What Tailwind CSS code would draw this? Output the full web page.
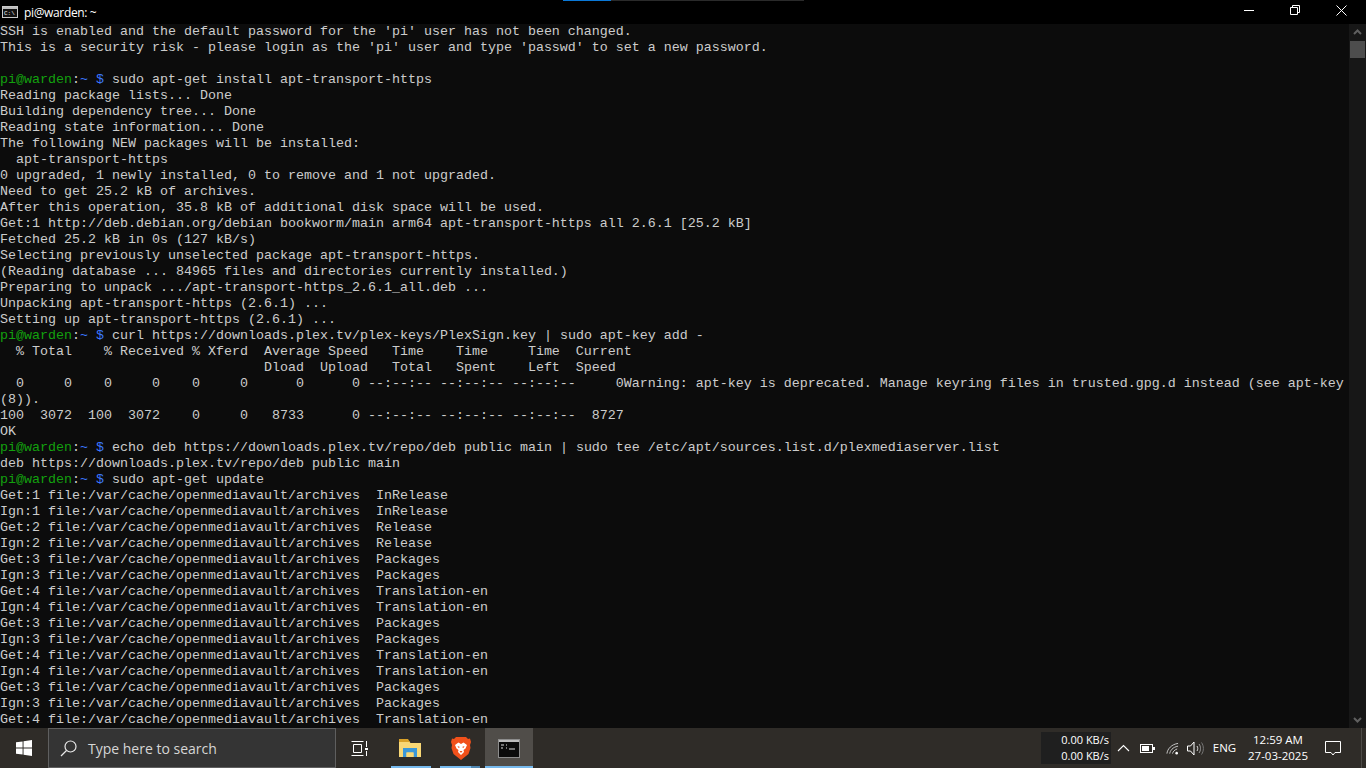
<!doctype html>
<html>
<head>
<meta charset="utf-8">
<script src="https://cdn.jsdelivr.net/npm/@tailwindcss/browser@4"></script>
</head>
<body class="w-[1366px] h-[768px] overflow-hidden bg-black flex flex-col font-['Liberation_Sans',sans-serif]">
<header class="relative h-[24px] shrink-0 bg-black flex items-center text-white">
  <div class="absolute top-0 left-[563px] w-[48px] h-px bg-[#0a78d7]"></div>
  <div class="absolute top-0 left-[611px] w-[193px] h-px bg-[#2a2a2a]"></div>
  <svg class="ml-[2px] mt-[-1px] w-[16px] h-[12px]" viewBox="0 0 16 12"><rect x="0.5" y="0.5" width="15" height="11" fill="#111" stroke="#c8c8c8"/><rect x="1" y="1" width="14" height="2" fill="#bbb"/><text x="2" y="9" font-size="6" fill="#eee" font-family="Liberation Mono">C:\</text></svg>
  <span class="ml-[6px] text-[12px] tracking-[-0.35px] pt-[1px] font-['Open_Sans',sans-serif] text-white">pi@warden: ~</span>
  <div class="ml-auto mr-[2px] flex h-full">
    <button class="w-[46px] h-full pb-[4px] flex items-center justify-center"><svg width="10" height="10" viewBox="0 0 10 10"><path d="M0 5.500h10" stroke="#fff"/></svg></button>
    <button class="w-[46px] h-full pb-[4px] flex items-center justify-center"><svg width="10" height="10" viewBox="0 0 10 10"><path d="M.5 2.500h7v7h-7zM2.500 2.500v-2h7v7h-2" fill="none" stroke="#fff"/></svg></button>
    <button class="w-[46px] h-full pb-[4px] flex items-center justify-center"><svg width="11" height="11" viewBox="0 0 11 11"><path d="M.5.5l10 10M10.500.5l-10 10" stroke="#fff"/></svg></button>
  </div>
</header>

<main class="flex h-[704px] shrink-0">
<pre class="flex-1 m-0 bg-[#0c0c0c] overflow-hidden text-[#cccccc] font-['Liberation_Mono',monospace] text-[13.334px] leading-[16px] whitespace-pre">SSH is enabled and the default password for the 'pi' user has not been changed.
This is a security risk - please login as the 'pi' user and type 'passwd' to set a new password.

<span class="text-[#13a10e]">pi@warden</span>:<span class="text-[#3b78ff]">~ $</span> sudo apt-get install apt-transport-https
Reading package lists... Done
Building dependency tree... Done
Reading state information... Done
The following NEW packages will be installed:
  apt-transport-https
0 upgraded, 1 newly installed, 0 to remove and 1 not upgraded.
Need to get 25.2 kB of archives.
After this operation, 35.8 kB of additional disk space will be used.
Get:1 http://deb.debian.org/debian bookworm/main arm64 apt-transport-https all 2.6.1 [25.2 kB]
Fetched 25.2 kB in 0s (127 kB/s)
Selecting previously unselected package apt-transport-https.
(Reading database ... 84965 files and directories currently installed.)
Preparing to unpack .../apt-transport-https_2.6.1_all.deb ...
Unpacking apt-transport-https (2.6.1) ...
Setting up apt-transport-https (2.6.1) ...
<span class="text-[#13a10e]">pi@warden</span>:<span class="text-[#3b78ff]">~ $</span> curl https://downloads.plex.tv/plex-keys/PlexSign.key | sudo apt-key add -
  % Total    % Received % Xferd  Average Speed   Time    Time     Time  Current
                                 Dload  Upload   Total   Spent    Left  Speed
  0     0    0     0    0     0      0      0 --:--:-- --:--:-- --:--:--     0Warning: apt-key is deprecated. Manage keyring files in trusted.gpg.d instead (see apt-key
(8)).
100  3072  100  3072    0     0   8733      0 --:--:-- --:--:-- --:--:--  8727
OK
<span class="text-[#13a10e]">pi@warden</span>:<span class="text-[#3b78ff]">~ $</span> echo deb https://downloads.plex.tv/repo/deb public main | sudo tee /etc/apt/sources.list.d/plexmediaserver.list
deb https://downloads.plex.tv/repo/deb public main
<span class="text-[#13a10e]">pi@warden</span>:<span class="text-[#3b78ff]">~ $</span> sudo apt-get update
Get:1 file:/var/cache/openmediavault/archives  InRelease
Ign:1 file:/var/cache/openmediavault/archives  InRelease
Get:2 file:/var/cache/openmediavault/archives  Release
Ign:2 file:/var/cache/openmediavault/archives  Release
Get:3 file:/var/cache/openmediavault/archives  Packages
Ign:3 file:/var/cache/openmediavault/archives  Packages
Get:4 file:/var/cache/openmediavault/archives  Translation-en
Ign:4 file:/var/cache/openmediavault/archives  Translation-en
Get:3 file:/var/cache/openmediavault/archives  Packages
Ign:3 file:/var/cache/openmediavault/archives  Packages
Get:4 file:/var/cache/openmediavault/archives  Translation-en
Ign:4 file:/var/cache/openmediavault/archives  Translation-en
Get:3 file:/var/cache/openmediavault/archives  Packages
Ign:3 file:/var/cache/openmediavault/archives  Packages
Get:4 file:/var/cache/openmediavault/archives  Translation-en</pre>
  <aside class="w-[17px] shrink-0 bg-[#171717] flex flex-col items-center">
    <svg class="mt-[5px]" width="9" height="6" viewBox="0 0 9 6"><path d="M1 5l3.500-3.500L8 5" fill="none" stroke="#606060" stroke-width="2"/></svg>
    <div class="mt-[6px] w-[15px] h-[17px] bg-[#4d4d4d]"></div>
    <svg class="mt-auto mb-[5px]" width="9" height="6" viewBox="0 0 9 6"><path d="M1 1l3.500 3.500L8 1" fill="none" stroke="#606060" stroke-width="2"/></svg>
  </aside>
</main>

<footer class="h-[40px] shrink-0 bg-[#2f2c28] flex items-stretch text-white">
  <div class="w-[48px] flex items-center justify-center">
    <svg width="16" height="16" viewBox="0 0 17 17" fill="#fff"><path d="M0 2.500l7-1v6.500H0zM8 1.300L17 0v8H8zM0 9h7v6.500l-7-1zM8 9h9v8l-9-1.300z"/></svg>
  </div>
  <div class="w-[288px] h-[40px] bg-[#343434] border border-[#5f5f5f] flex items-center">
    <svg class="ml-[11px]" width="17" height="17" viewBox="0 0 17 17" fill="none" stroke="#e8e8e8" stroke-width="1.200"><circle cx="10.500" cy="6.500" r="5.500"/><path d="M6.500 10.500L1 16"/></svg>
    <span class="ml-[11px] text-[14px] text-[#d6d6d6] font-['Open_Sans',sans-serif]">Type here to search</span>
  </div>
  <div class="w-[48px] pr-[1px] flex items-center justify-center">
    <svg width="17" height="17" viewBox="0 0 17 17" fill="none" stroke="#fff"><path d="M.5 1.500h12M.5 15.500h12M2.500 4.500h8v8h-8zM15.500 1v6M15.500 11v5"/><rect x="14" y="8" width="3" height="2" fill="#fff" stroke="none"/></svg>
  </div>
  <div class="relative w-[52px] flex items-center justify-center">
    <svg width="22" height="18" viewBox="0 0 22 18"><path d="M0 2h10l1.500 2H22v14H0z" fill="#f8d775"/><path d="M0 0h9l2 3H0z" fill="#d9a128"/><path d="M4 18V9h14v9h-3.500v-4.500h-7V18z" fill="#3a97d8"/><path d="M7.500 18v-4.500h7V18z" fill="#f8d775"/></svg>
    <div class="absolute bottom-0 left-[7px] w-[40px] h-[2px] bg-[#76b9ed]"></div>
  </div>
  <div class="relative w-[49px] flex items-center justify-center">
    <svg width="20" height="24" viewBox="0 0 20 24"><path d="M5 1h10l2 2 2-.5L20 6l-1 3 .5 3-2 6-7.500 6L2.500 18l-2-6 .5-3-1-3 1-3.500 2 .5z" fill="#f1511b"/><path d="M4 9l3.500-2.500L10 8l2.500-1.500L16 9l-1.500 3.500-2 1.500.5 2-3 3-3-3 .5-2-2-1.500z" fill="#fff"/><path d="M6.500 10l2.500 1-1.500 1zM13.500 10l-2.500 1 1.500 1zM8.500 15h3L10 17z" fill="#f1511b"/></svg>
    <div class="absolute bottom-0 left-[4px] w-[31px] h-[2px] bg-[#76b9ed]"></div>
    <div class="absolute bottom-0 left-[35px] w-[9px] h-[2px] bg-[#4f86b0]"></div>
  </div>
  <div class="relative w-[48px] bg-[#504d49] flex items-center justify-center">
    <svg width="22" height="19" viewBox="0 0 22 19"><rect x="0.500" y="0.500" width="21" height="18" fill="#0b0b0b" stroke="#8c8c8c"/><rect x="1" y="1" width="20" height="2" fill="#bdbdbd"/><path d="M3 6h3M3 9h2M8 6h1M8 9h1M11 10h6" stroke="#ddd" stroke-width="1.200"/></svg>
    <div class="absolute bottom-0 left-0 right-0 h-[2px] bg-[#76b9ed]"></div>
  </div>
  <div class="ml-auto flex items-stretch">
    <div class="my-[4px] w-[70px] pr-[2px] bg-[#1f1f1f] flex flex-col items-end justify-center text-[11px] leading-[16px] font-['Open_Sans',sans-serif]">
      <span>0.00 KB/s</span><span>0.00 KB/s</span>
    </div>
    <div class="w-[24px] flex items-center justify-center">
      <svg width="13" height="8" viewBox="0 0 13 8"><path d="M1 7l5.500-5.500L12 7" fill="none" stroke="#fff" stroke-width="1.100"/></svg>
    </div>
    <div class="w-[25px] flex items-center justify-center">
      <svg width="15" height="9" viewBox="0 0 15 9"><rect x="0.500" y="0.500" width="12" height="8" fill="none" stroke="#fff"/><rect x="2" y="2" width="7" height="5" fill="#fff"/><rect x="13" y="3" width="2" height="3" fill="#fff"/></svg>
    </div>
    <div class="w-[24px] flex items-center justify-center">
      <svg width="13" height="13" viewBox="0 0 14 13" fill="none" stroke="#d0d0d0"><path d="M1 12C1.500 7 6 2 13 1M4 12c.5-3 3-7 9-8M7 12c.5-2 2-4 5-5"/><circle cx="11.500" cy="11.500" r="1.400" fill="#fff" stroke="none"/></svg>
    </div>
    <div class="w-[22px] flex items-center justify-center">
      <svg width="17" height="15" viewBox="0 0 17 15" fill="none" stroke="#fff"><path d="M.5 5h3l3.500-4v13l-3.500-4h-3z"/><path d="M10 5c1 1.500 1 3.500 0 5" stroke="#ddd"/><path d="M12 3c2 2.500 2 6.500 0 9" stroke="#999"/><path d="M14.500 1.500c2.500 3.500 2.500 8.500 0 12" stroke="#777"/></svg>
    </div>
    <span class="w-[37px] flex items-center justify-center text-[11.500px] font-['Open_Sans',sans-serif]">ENG</span>
    <div class="w-[70px] flex flex-col items-center justify-center text-[11.500px] leading-[16px] font-['Open_Sans',sans-serif]">
      <span>12:59 AM</span><span>27-03-2025</span>
    </div>
    <div class="w-[40px] flex items-center justify-center">
      <svg width="16" height="15" viewBox="0 0 16 15" fill="none" stroke="#fff"><path d="M.5.5h15v11H10l-2 2.500-2-2.500H.5z"/></svg>
    </div>
    <div class="w-[8px]"></div>
    <div class="w-[5px] border-l border-[#4d4b47]"></div>
  </div>
</footer>
</body>
</html>
